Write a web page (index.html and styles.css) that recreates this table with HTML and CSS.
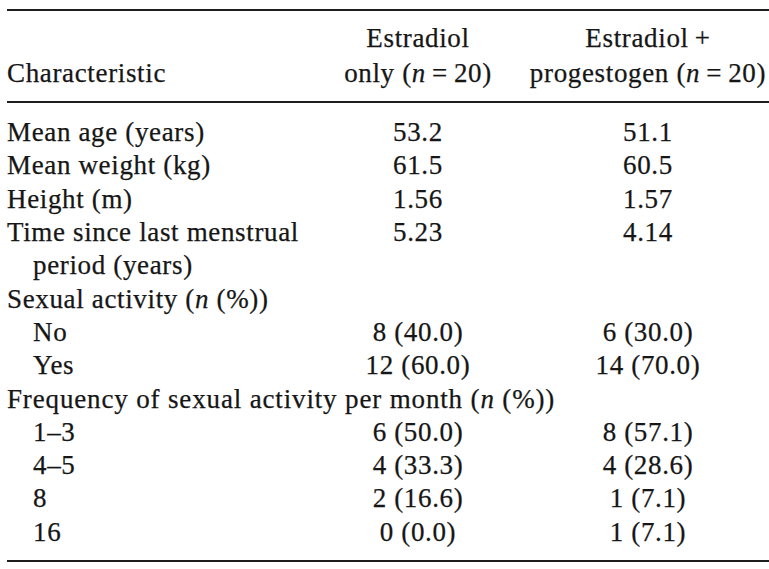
FILE: index.html
```html
<!DOCTYPE html>
<html>
<head>
<meta charset="utf-8">
<link rel="stylesheet" href="styles.css">
</head>
<body>
<div class="wrap">
<table class="tbl">
  <colgroup>
    <col class="c-a">
    <col class="c-b">
    <col class="c-c">
  </colgroup>
  <thead>
    <tr>
      <th class="lab">Characteristic</th>
      <th class="val1">Estradiol<br>only (<i>n</i>&thinsp;=&thinsp;20)</th>
      <th class="val2">Estradiol&thinsp;+<br>progestogen (<i>n</i>&thinsp;=&thinsp;20)</th>
    </tr>
  </thead>
  <tbody>
    <tr class="first"><td class="lab">Mean age (years)</td><td class="val1">53.2</td><td class="val2">51.1</td></tr>
    <tr><td class="lab">Mean weight (kg)</td><td class="val1">61.5</td><td class="val2">60.5</td></tr>
    <tr><td class="lab">Height (m)</td><td class="val1">1.56</td><td class="val2">1.57</td></tr>
    <tr><td class="lab hang">Time since last menstrual period (years)</td><td class="val1">5.23</td><td class="val2">4.14</td></tr>
    <tr><td class="lab" colspan="3">Sexual activity (<i>n</i> (%))</td></tr>
    <tr><td class="lab sub">No</td><td class="val1">8 (40.0)</td><td class="val2">6 (30.0)</td></tr>
    <tr><td class="lab sub">Yes</td><td class="val1">12 (60.0)</td><td class="val2">14 (70.0)</td></tr>
    <tr><td class="lab wide" colspan="3">Frequency of sexual activity per month (<i>n</i> (%))</td></tr>
    <tr><td class="lab sub">1–3</td><td class="val1">6 (50.0)</td><td class="val2">8 (57.1)</td></tr>
    <tr><td class="lab sub">4–5</td><td class="val1">4 (33.3)</td><td class="val2">4 (28.6)</td></tr>
    <tr><td class="lab sub">8</td><td class="val1">2 (16.6)</td><td class="val2">1 (7.1)</td></tr>
    <tr class="last"><td class="lab sub">16</td><td class="val1">0 (0.0)</td><td class="val2">1 (7.1)</td></tr>
  </tbody>
</table>
</div>
</body>
</html>
```

FILE: styles.css
```css
html, body {
  margin: 0;
  padding: 0;
  background: #ffffff;
}

.wrap {
  padding: 9px 0 0 7px;
  width: 762px;
}

.tbl {
  width: 762px;
  border-collapse: collapse;
  table-layout: fixed;
  font-family: "Liberation Serif", "Times New Roman", serif;
  font-size: 27px;
  letter-spacing: 0.65px;
  color: #161616;
  -webkit-text-stroke: 0.25px #161616;
  border-top: 2px solid #1e1e1e;
  border-bottom: 2px solid #1e1e1e;
}

.c-a { width: 329px; }
.c-b { width: 164px; }
.c-c { width: 269px; }

.tbl th {
  font-weight: normal;
  line-height: 35px;
  vertical-align: bottom;
  padding: 10px 0 10px 0;
  border-bottom: 2px solid #1e1e1e;
  white-space: nowrap;
}

.tbl td {
  line-height: 33.3px;
  padding: 0;
  vertical-align: top;
}

.tbl tbody tr.first td { padding-top: 13.2px; }
.tbl tbody tr.last td { padding-bottom: 10.5px; }

.lab {
  text-align: left;
  white-space: nowrap;
}

.tbl td.wide { letter-spacing: 0.85px; }

.tbl td.lab.hang {
  white-space: normal;
  padding-left: 26px;
  text-indent: -26px;
}

.tbl td.lab.sub { padding-left: 26px; }

.val1 {
  text-align: center;
  white-space: nowrap;
}

.val2 {
  text-align: center;
  white-space: nowrap;
}

.tbl td.val2,
.tbl th.val2 { padding-left: 27px; }

i {
  font-style: italic;
}
```
